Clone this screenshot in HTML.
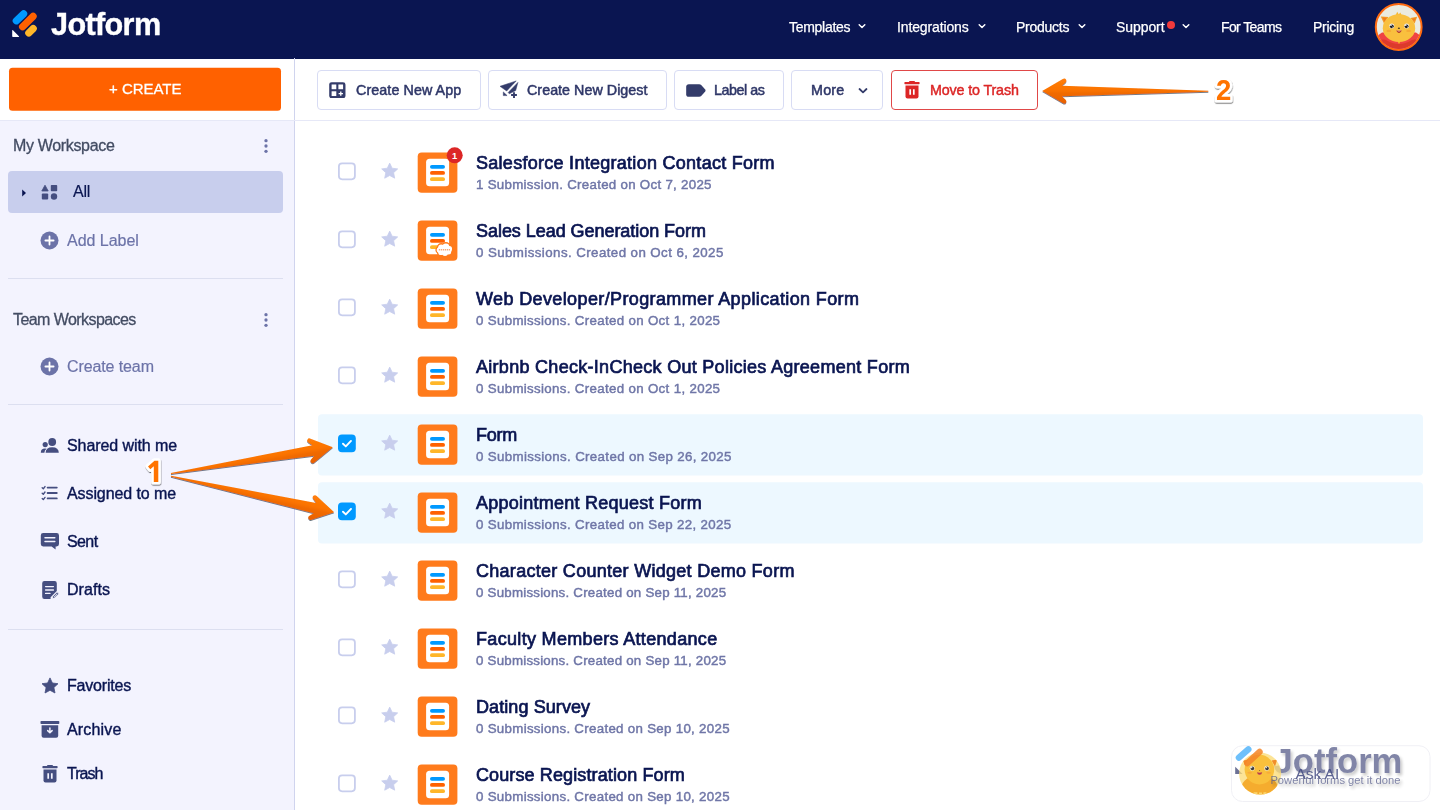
<!DOCTYPE html>
<html><head><meta charset="utf-8"><title>My Forms</title>
<style>
*{box-sizing:border-box;margin:0;padding:0}
html,body{width:1440px;height:810px;overflow:hidden;background:#fff;font-family:"Liberation Sans",sans-serif;color:#0a1551}
.x{will-change:transform;position:absolute;white-space:nowrap;display:block;font-family:"Liberation Sans",sans-serif}
.a{position:absolute;display:block}
#hdr{left:0;top:0;width:1440px;height:58.5px;background:#0a1551}
#side{left:0;top:120.5px;width:295px;height:689.5px;background:#f3f3fe}
#sideb{left:294px;top:58px;width:1px;height:752px;background:#d0d4ee}
#allrow{left:8px;top:171px;width:274.5px;height:41.5px;background:#c8ceed;border-radius:4px}
.hr{left:8px;width:274.5px;height:1px;background:#dcdff0}
#tbl{left:0;top:120.2px;width:1440px;height:1px;background:#e6e8f7}
.btn{top:70px;height:39.5px;border:1px solid #d8dcf4;border-radius:4px;background:#fff}
.row{left:318px;width:1105px;height:61.5px;border-radius:4px}
.sel{background:#edf8ff}
.cb{left:338px;width:17.7px;height:17.5px;border:1.8px solid #c8ceed;border-radius:4px;background:#fff}
.cb.on{background:#0099ff;border-color:#0099ff}
.fi{left:417.7px;width:39.7px;height:40.4px;background:#ff7b1c;border-radius:4px}
.fd{left:426.1px;width:23px;height:27.5px;background:#fff;border-radius:3.5px}
.fl{left:430px;width:15px;height:3.8px;border-radius:2px}

</style></head><body>
<div class="a" id="hdr"></div>
<svg class="a" style="left:10px;top:8px" width="30" height="32" viewBox="10 8 30 32">
<path d="M12.2 30.6 L12.2 36.2 Q12.2 36.9 12.9 36.9 L18.6 36.9 Q19.6 36.9 18.9 36.2 L13 30.3 Q12.2 29.6 12.2 30.6Z" fill="#fff"/>
<line x1="16.3" y1="20.8" x2="23.6" y2="13.8" stroke="#0099ff" stroke-width="7.2" stroke-linecap="round"/>
<line x1="22.6" y1="26.8" x2="33.1" y2="16.4" stroke="#ff6100" stroke-width="7.2" stroke-linecap="round"/>
<line x1="28.8" y1="33" x2="33.2" y2="28.6" stroke="#ffb629" stroke-width="7.2" stroke-linecap="round"/>
</svg>
<svg class="a" style="left:857.3px;top:21px" width="10" height="10" viewBox="0 0 10 10"><path d="M2.2 3.8 L5 6.5 L7.8 3.8" fill="none" stroke="#fff" stroke-width="1.5" stroke-linecap="round" stroke-linejoin="round"/></svg>
<svg class="a" style="left:977px;top:21px" width="10" height="10" viewBox="0 0 10 10"><path d="M2.2 3.8 L5 6.5 L7.8 3.8" fill="none" stroke="#fff" stroke-width="1.5" stroke-linecap="round" stroke-linejoin="round"/></svg>
<svg class="a" style="left:1077px;top:21px" width="10" height="10" viewBox="0 0 10 10"><path d="M2.2 3.8 L5 6.5 L7.8 3.8" fill="none" stroke="#fff" stroke-width="1.5" stroke-linecap="round" stroke-linejoin="round"/></svg>
<svg class="a" style="left:1181.3px;top:21px" width="10" height="10" viewBox="0 0 10 10"><path d="M2.2 3.8 L5 6.5 L7.8 3.8" fill="none" stroke="#fff" stroke-width="1.5" stroke-linecap="round" stroke-linejoin="round"/></svg>
<div class="a" style="left:1167px;top:20.8px;width:8px;height:8px;border-radius:50%;background:#f23a3c"></div>
<svg class="a" style="left:1374px;top:2px" width="50" height="50" viewBox="0 0 50 50">
<defs><clipPath id="avc"><circle cx="24.7" cy="25" r="22"/></clipPath></defs>
<circle cx="24.7" cy="25" r="22.9" fill="#ebebe0" stroke="#ff6a10" stroke-width="2"/>
<g clip-path="url(#avc)">
<path d="M0 36 L8 30.5 L42 30.5 L50 36 L50 50 L0 50Z" fill="#ef4343"/>
<path d="M0 40 Q8 36.5 12 38 Q25 46 38 38 Q42 36.5 50 40 L50 50 L0 50Z" fill="#dc3a2b"/>
<path d="M23.4 38.4 L26.6 38.4 L25.6 41.6 L24.4 41.6Z" fill="#f4b223"/>
<path d="M6.8 14.4 L14.4 15 L10 21.5Z" fill="#f59a23"/><path d="M43.2 14.8 L36.4 16 L40.6 21.5Z" fill="#f59a23"/>
<path d="M8.6 15.6 L12.6 16 L10.4 19.4Z" fill="#ee7d22"/><path d="M41.6 16 L38.2 16.8 L40.2 19.6Z" fill="#ee7d22"/>
<path d="M21.6 13.6 L23.2 9.8 L24.8 12.4 L26.2 10.4 L28 13.8Z" fill="#f8b62c"/>
<ellipse cx="25" cy="26.2" rx="16.2" ry="13.9" fill="#f9c03e"/>
<ellipse cx="14.8" cy="28.9" rx="2.4" ry="1.2" fill="#f6ab35"/><ellipse cx="34.6" cy="28.9" rx="2.4" ry="1.2" fill="#f6ab35"/>
<circle cx="17.8" cy="24.1" r="2.5" fill="#f4efe4"/><circle cx="32.6" cy="24.1" r="2.5" fill="#f4efe4"/>
<circle cx="17.8" cy="24.3" r="1.9" fill="#1d1d22"/><circle cx="32.6" cy="24.3" r="1.9" fill="#1d1d22"/>
<circle cx="17" cy="23.3" r=".8" fill="#fff"/><circle cx="31.8" cy="23.3" r=".8" fill="#fff"/>
<circle cx="18.7" cy="24.9" r=".5" fill="#fff"/><circle cx="33.5" cy="24.9" r=".5" fill="#fff"/>
<ellipse cx="24.9" cy="26.3" rx="1.1" ry=".7" fill="#4a3a20"/>
<path d="M22.3 28.3 Q25 29.2 27.7 28.3 Q27.2 31 25 31 Q22.8 31 22.3 28.3Z" fill="#a8231c"/>
<path d="M22.6 28.4 Q25 29.2 27.4 28.4 L27.2 29.1 Q25 29.8 22.8 29.1Z" fill="#fbe9d8"/>
</g></svg>
<div class="a" id="side"></div>
<div class="a" id="sideb"></div>
<svg class="a" style="left:0;top:60px" width="295" height="60" viewBox="0 60 295 60"><rect x="9" y="67.7" width="272" height="43" rx="3.5" fill="#ff6100"/></svg>
<div class="a" id="allrow"></div>
<div class="a hr" style="top:278px"></div>
<div class="a hr" style="top:404px"></div>
<div class="a hr" style="top:628.5px"></div>
<svg class="a" style="left:262px;top:136.5px" width="8" height="18" viewBox="0 0 8 18"><circle cx="4" cy="3.7" r="1.65" fill="#6c73a8"/><circle cx="4" cy="9" r="1.65" fill="#6c73a8"/><circle cx="4" cy="14.3" r="1.65" fill="#6c73a8"/></svg>
<svg class="a" style="left:262px;top:310.5px" width="8" height="18" viewBox="0 0 8 18"><circle cx="4" cy="3.7" r="1.65" fill="#6c73a8"/><circle cx="4" cy="9" r="1.65" fill="#6c73a8"/><circle cx="4" cy="14.3" r="1.65" fill="#6c73a8"/></svg>
<svg class="a" style="left:20px;top:187px" width="8" height="12" viewBox="0 0 8 12"><path d="M2.2 2.6 L6 6 L2.2 9.4Z" fill="#0a1551"/></svg>
<svg class="a" style="left:41px;top:184px" width="18" height="17" viewBox="0 0 18 17">
<path d="M4 1.2 L7.2 7 L.8 7Z" fill="#454e80" stroke="#454e80" stroke-width=".8" stroke-linejoin="round"/>
<rect x="9.8" y="1" width="6.4" height="6.2" rx=".8" fill="#454e80"/>
<rect x=".8" y="9.4" width="6.4" height="6.2" rx="1" fill="#454e80"/>
<circle cx="13" cy="12.5" r="3.2" fill="#454e80"/></svg>
<svg class="a" style="left:40px;top:230.5px" width="19" height="19" viewBox="0 0 19 19"><circle cx="9.5" cy="9.5" r="9" fill="#6c73a8"/><path d="M9.5 5.4 V13.6 M5.4 9.5 H13.6" stroke="#fff" stroke-width="1.8" stroke-linecap="round"/></svg>
<svg class="a" style="left:40px;top:356.7px" width="19" height="19" viewBox="0 0 19 19"><circle cx="9.5" cy="9.5" r="9" fill="#6c73a8"/><path d="M9.5 5.4 V13.6 M5.4 9.5 H13.6" stroke="#fff" stroke-width="1.8" stroke-linecap="round"/></svg>
<svg class="a" style="left:40px;top:437px" width="20" height="17" viewBox="0 0 20 17">
<circle cx="12.2" cy="5" r="3.9" fill="#454e80"/>
<path d="M5.6 15.8 Q5.6 10.2 12.2 10.2 Q18.8 10.2 18.8 15.8Z" fill="#454e80"/>
<circle cx="5.2" cy="7.6" r="2.6" fill="#454e80"/>
<path d="M.8 15.8 Q.8 11.6 5 11.6 Q6 11.6 6.6 11.8 Q4.4 13.2 4.4 15.8Z" fill="#454e80"/></svg>
<svg class="a" style="left:41px;top:485px" width="18" height="16" viewBox="0 0 18 16">
<g stroke="#454e80" stroke-width="1.8" stroke-linecap="round" fill="none">
<path d="M6.6 2.6 H15.8 M6.6 8 H15.8 M6.6 13.4 H15.8"/>
<path d="M1.2 2.8 L2.3 3.8 L4 1.6 M1.2 8.2 L2.3 9.2 L4 7 M1.2 13.6 L2.3 14.6 L4 12.4" stroke-width="1.4" stroke-linejoin="round"/></g></svg>
<svg class="a" style="left:40px;top:532px" width="20" height="19" viewBox="0 0 20 19">
<path d="M3.2 1 H16.6 Q19 1 19 3.4 V12 Q19 14.4 16.6 14.4 H15.6 V17.6 L11.6 14.4 H3.2 Q.8 14.4 .8 12 V3.4 Q.8 1 3.2 1Z" fill="#454e80"/>
<path d="M5 5.8 H14.8 M5 9.4 H14.8" stroke="#f3f3fe" stroke-width="1.5" stroke-linecap="round"/></svg>
<svg class="a" style="left:41px;top:579.5px" width="19" height="20" viewBox="0 0 19 20">
<path d="M3.4 1 H13.6 Q15.8 1 15.8 3.2 V11 L9.6 17.2 V19 H3.4 Q1.2 19 1.2 16.8 V3.2 Q1.2 1 3.4 1Z" fill="#454e80"/>
<path d="M4.6 6.6 H12.4 M4.6 10 H12.4 M4.6 13.4 H9" stroke="#f3f3fe" stroke-width="1.4" stroke-linecap="round"/>
<path d="M11.4 18.6 L11.8 16.4 L15.6 12.6 Q16.4 11.9 17.2 12.7 Q18 13.5 17.3 14.3 L13.5 18.1Z" fill="#454e80" stroke="#f3f3fe" stroke-width=".9"/>
<path d="M13 17 L16.3 13.7" stroke="#f3f3fe" stroke-width=".8"/></svg>
<svg class="a" style="left:41px;top:677px" width="18" height="17" viewBox="0 0 18 17"><path d="M9 .9 L11.4 6 L17 6.7 L12.9 10.5 L14 16 L9 13.3 L4 16 L5.1 10.5 L1 6.7 L6.6 6Z" fill="#454e80" stroke="#454e80" stroke-width=".8" stroke-linejoin="round"/></svg>
<svg class="a" style="left:40px;top:720px" width="20" height="19" viewBox="0 0 20 19">
<rect x=".5" y="1" width="18.8" height="3" rx=".8" fill="#454e80"/>
<path d="M1.6 5.2 H18.2 V15.8 Q18.2 17.8 16.2 17.8 H3.6 Q1.6 17.8 1.6 15.8Z" fill="#454e80"/>
<path d="M9.9 8 V12.6 M7.7 10.6 L9.9 12.8 L12.1 10.6" stroke="#f3f3fe" stroke-width="1.5" stroke-linecap="round" stroke-linejoin="round" fill="none"/></svg>
<svg class="a" style="left:41.5px;top:764px" width="16" height="19.5" viewBox="0 0 16 19.5"><path d="M5.6 .9 H10.4 L11.2 2 H15 Q15.6 2 15.6 2.7 V3.6 Q15.6 4.2 15 4.2 H1 Q.4 4.2 .4 3.6 V2.7 Q.4 2 1 2 H4.8Z" fill="#454e80"/>
<path d="M1.5 5.4 H14.5 V16.6 Q14.5 18.6 12.5 18.6 H3.5 Q1.5 18.6 1.5 16.6Z" fill="#454e80"/>
<path d="M6.2 9.2 V14.8 M9.8 9.2 V14.8" stroke="#f3f3fe" stroke-width="1.7"/></svg>
<div class="a" id="tbl"></div>
<div class="a btn" style="left:317px;width:163.5px;"></div>
<div class="a btn" style="left:488px;width:178.5px;"></div>
<div class="a btn" style="left:674px;width:109.79999999999995px;"></div>
<div class="a btn" style="left:791.4px;width:91.20000000000005px;"></div>
<div class="a btn" style="left:891px;width:146.79999999999995px;border-color:#e04848;"></div>
<svg class="a" style="left:329px;top:81.7px" width="16.7" height="16.5" viewBox="0 0 16 16" preserveAspectRatio="none">
<rect x=".2" y=".2" width="15.6" height="15.6" rx="2.4" fill="#343c6a"/>
<rect x="2.5" y="2.4" width="4.5" height="4.6" fill="#fff"/><rect x="9" y="2.4" width="4.5" height="4.6" fill="#fff"/>
<rect x="2.5" y="9" width="4.5" height="4.6" fill="#fff"/>
<path d="M11.3 9.2 V13.4 M9.2 11.3 H13.4" stroke="#fff" stroke-width="1.3"/></svg>
<svg class="a" style="left:494px;top:76px" width="32" height="28" viewBox="0 0 32 28">
<path d="M6 10.3 L22.2 4.9 L12.7 15Z" fill="#343c6a" stroke="#343c6a" stroke-width=".5" stroke-linejoin="round"/>
<path d="M23.9 6.4 L21.7 14.6 L15.3 17.8 L14.2 16.5Z" fill="#343c6a" stroke="#343c6a" stroke-width=".5" stroke-linejoin="round"/>
<path d="M9.3 15.9 L9.3 19.6 L13.1 19.6Z" fill="#343c6a" stroke="#343c6a" stroke-width=".5" stroke-linejoin="round"/>
<path d="M20 16.2 V21.9 M17.1 19 H22.9" stroke="#343c6a" stroke-width="1.9"/></svg>
<svg class="a" style="left:685.5px;top:83.5px" width="20" height="13" viewBox="0 0 20 13"><path d="M2.8 .2 H13.2 Q14.4 .2 15.2 1 L19.2 5.4 Q20 6.5 19.2 7.6 L15.2 12 Q14.4 12.8 13.2 12.8 H2.8 Q.2 12.8 .2 10.2 V2.8 Q.2 .2 2.8 .2Z" fill="#343c6a"/></svg>
<svg class="a" style="left:857px;top:86px" width="12" height="10" viewBox="0 0 12 10"><path d="M2.5 3 L6 6.3 L9.5 3" fill="none" stroke="#343c6a" stroke-width="1.8" stroke-linecap="round" stroke-linejoin="round"/></svg>
<svg class="a" style="left:903.8px;top:80.2px" width="16" height="19.5" viewBox="0 0 16 19.5"><path d="M5.6 .9 H10.4 L11.2 2 H15 Q15.6 2 15.6 2.7 V3.6 Q15.6 4.2 15 4.2 H1 Q.4 4.2 .4 3.6 V2.7 Q.4 2 1 2 H4.8Z" fill="#dc2626"/>
<path d="M1.5 5.4 H14.5 V16.6 Q14.5 18.6 12.5 18.6 H3.5 Q1.5 18.6 1.5 16.6Z" fill="#dc2626"/>
<path d="M6.2 9.2 V14.8 M9.8 9.2 V14.8" stroke="#fff" stroke-width="1.7"/></svg>
<svg class="a" style="left:0;top:0" width="1440" height="810" viewBox="0 0 1440 810">
<rect x="338.9" y="163.3" width="16" height="16" rx="3.2" fill="#fff" stroke="#c8ceed" stroke-width="1.8"/>
<path transform="translate(380.7 162.2)" d="M9 .9 L11.4 6 L17 6.7 L12.9 10.5 L14 16 L9 13.3 L4 16 L5.1 10.5 L1 6.7 L6.6 6Z" fill="#c8ceed" stroke="#c8ceed" stroke-width=".8" stroke-linejoin="round"/>
<rect x="417.7" y="152.4" width="39.7" height="40.4" rx="4" fill="#ff7b1c"/>
<rect x="426.1" y="158.8" width="23" height="27.5" rx="3.5" fill="#fff"/>
<rect x="430" y="164.9" width="15" height="3.8" rx="1.9" fill="#0099ff"/>
<rect x="430" y="171.0" width="15" height="3.8" rx="1.9" fill="#ff6100"/>
<rect x="430" y="177.3" width="15" height="3.8" rx="1.9" fill="#ffb629"/>
<rect x="338.9" y="231.3" width="16" height="16" rx="3.2" fill="#fff" stroke="#c8ceed" stroke-width="1.8"/>
<path transform="translate(380.7 230.2)" d="M9 .9 L11.4 6 L17 6.7 L12.9 10.5 L14 16 L9 13.3 L4 16 L5.1 10.5 L1 6.7 L6.6 6Z" fill="#c8ceed" stroke="#c8ceed" stroke-width=".8" stroke-linejoin="round"/>
<rect x="417.7" y="220.4" width="39.7" height="40.4" rx="4" fill="#ff7b1c"/>
<rect x="426.1" y="226.8" width="23" height="27.5" rx="3.5" fill="#fff"/>
<rect x="430" y="232.9" width="15" height="3.8" rx="1.9" fill="#0099ff"/>
<rect x="430" y="239.0" width="15" height="3.8" rx="1.9" fill="#ff6100"/>
<rect x="430" y="245.3" width="15" height="3.8" rx="1.9" fill="#ffb629"/>
<rect x="338.9" y="299.3" width="16" height="16" rx="3.2" fill="#fff" stroke="#c8ceed" stroke-width="1.8"/>
<path transform="translate(380.7 298.2)" d="M9 .9 L11.4 6 L17 6.7 L12.9 10.5 L14 16 L9 13.3 L4 16 L5.1 10.5 L1 6.7 L6.6 6Z" fill="#c8ceed" stroke="#c8ceed" stroke-width=".8" stroke-linejoin="round"/>
<rect x="417.7" y="288.4" width="39.7" height="40.4" rx="4" fill="#ff7b1c"/>
<rect x="426.1" y="294.8" width="23" height="27.5" rx="3.5" fill="#fff"/>
<rect x="430" y="300.9" width="15" height="3.8" rx="1.9" fill="#0099ff"/>
<rect x="430" y="307.0" width="15" height="3.8" rx="1.9" fill="#ff6100"/>
<rect x="430" y="313.3" width="15" height="3.8" rx="1.9" fill="#ffb629"/>
<rect x="338.9" y="367.3" width="16" height="16" rx="3.2" fill="#fff" stroke="#c8ceed" stroke-width="1.8"/>
<path transform="translate(380.7 366.2)" d="M9 .9 L11.4 6 L17 6.7 L12.9 10.5 L14 16 L9 13.3 L4 16 L5.1 10.5 L1 6.7 L6.6 6Z" fill="#c8ceed" stroke="#c8ceed" stroke-width=".8" stroke-linejoin="round"/>
<rect x="417.7" y="356.4" width="39.7" height="40.4" rx="4" fill="#ff7b1c"/>
<rect x="426.1" y="362.8" width="23" height="27.5" rx="3.5" fill="#fff"/>
<rect x="430" y="368.9" width="15" height="3.8" rx="1.9" fill="#0099ff"/>
<rect x="430" y="375.0" width="15" height="3.8" rx="1.9" fill="#ff6100"/>
<rect x="430" y="381.3" width="15" height="3.8" rx="1.9" fill="#ffb629"/>
<rect x="318" y="414.2" width="1105" height="61.3" rx="4" fill="#edf8ff"/>
<rect x="338" y="434.4" width="17.8" height="17.8" rx="4" fill="#0099ff"/>
<path d="M343 443.7 l2.8 2.7 l5.2 -5.5" fill="none" stroke="#fff" stroke-width="1.9" stroke-linecap="round" stroke-linejoin="round"/>
<path transform="translate(380.7 434.2)" d="M9 .9 L11.4 6 L17 6.7 L12.9 10.5 L14 16 L9 13.3 L4 16 L5.1 10.5 L1 6.7 L6.6 6Z" fill="#c8ceed" stroke="#c8ceed" stroke-width=".8" stroke-linejoin="round"/>
<rect x="417.7" y="424.4" width="39.7" height="40.4" rx="4" fill="#ff7b1c"/>
<rect x="426.1" y="430.8" width="23" height="27.5" rx="3.5" fill="#fff"/>
<rect x="430" y="436.9" width="15" height="3.8" rx="1.9" fill="#0099ff"/>
<rect x="430" y="443.0" width="15" height="3.8" rx="1.9" fill="#ff6100"/>
<rect x="430" y="449.3" width="15" height="3.8" rx="1.9" fill="#ffb629"/>
<rect x="318" y="482.2" width="1105" height="61.3" rx="4" fill="#edf8ff"/>
<rect x="338" y="502.4" width="17.8" height="17.8" rx="4" fill="#0099ff"/>
<path d="M343 511.7 l2.8 2.7 l5.2 -5.5" fill="none" stroke="#fff" stroke-width="1.9" stroke-linecap="round" stroke-linejoin="round"/>
<path transform="translate(380.7 502.2)" d="M9 .9 L11.4 6 L17 6.7 L12.9 10.5 L14 16 L9 13.3 L4 16 L5.1 10.5 L1 6.7 L6.6 6Z" fill="#c8ceed" stroke="#c8ceed" stroke-width=".8" stroke-linejoin="round"/>
<rect x="417.7" y="492.4" width="39.7" height="40.4" rx="4" fill="#ff7b1c"/>
<rect x="426.1" y="498.8" width="23" height="27.5" rx="3.5" fill="#fff"/>
<rect x="430" y="504.9" width="15" height="3.8" rx="1.9" fill="#0099ff"/>
<rect x="430" y="511.0" width="15" height="3.8" rx="1.9" fill="#ff6100"/>
<rect x="430" y="517.3" width="15" height="3.8" rx="1.9" fill="#ffb629"/>
<rect x="338.9" y="571.3" width="16" height="16" rx="3.2" fill="#fff" stroke="#c8ceed" stroke-width="1.8"/>
<path transform="translate(380.7 570.2)" d="M9 .9 L11.4 6 L17 6.7 L12.9 10.5 L14 16 L9 13.3 L4 16 L5.1 10.5 L1 6.7 L6.6 6Z" fill="#c8ceed" stroke="#c8ceed" stroke-width=".8" stroke-linejoin="round"/>
<rect x="417.7" y="560.4" width="39.7" height="40.4" rx="4" fill="#ff7b1c"/>
<rect x="426.1" y="566.8" width="23" height="27.5" rx="3.5" fill="#fff"/>
<rect x="430" y="572.9" width="15" height="3.8" rx="1.9" fill="#0099ff"/>
<rect x="430" y="579.0" width="15" height="3.8" rx="1.9" fill="#ff6100"/>
<rect x="430" y="585.3" width="15" height="3.8" rx="1.9" fill="#ffb629"/>
<rect x="338.9" y="639.3" width="16" height="16" rx="3.2" fill="#fff" stroke="#c8ceed" stroke-width="1.8"/>
<path transform="translate(380.7 638.2)" d="M9 .9 L11.4 6 L17 6.7 L12.9 10.5 L14 16 L9 13.3 L4 16 L5.1 10.5 L1 6.7 L6.6 6Z" fill="#c8ceed" stroke="#c8ceed" stroke-width=".8" stroke-linejoin="round"/>
<rect x="417.7" y="628.4" width="39.7" height="40.4" rx="4" fill="#ff7b1c"/>
<rect x="426.1" y="634.8" width="23" height="27.5" rx="3.5" fill="#fff"/>
<rect x="430" y="640.9" width="15" height="3.8" rx="1.9" fill="#0099ff"/>
<rect x="430" y="647.0" width="15" height="3.8" rx="1.9" fill="#ff6100"/>
<rect x="430" y="653.3" width="15" height="3.8" rx="1.9" fill="#ffb629"/>
<rect x="338.9" y="707.3" width="16" height="16" rx="3.2" fill="#fff" stroke="#c8ceed" stroke-width="1.8"/>
<path transform="translate(380.7 706.2)" d="M9 .9 L11.4 6 L17 6.7 L12.9 10.5 L14 16 L9 13.3 L4 16 L5.1 10.5 L1 6.7 L6.6 6Z" fill="#c8ceed" stroke="#c8ceed" stroke-width=".8" stroke-linejoin="round"/>
<rect x="417.7" y="696.4" width="39.7" height="40.4" rx="4" fill="#ff7b1c"/>
<rect x="426.1" y="702.8" width="23" height="27.5" rx="3.5" fill="#fff"/>
<rect x="430" y="708.9" width="15" height="3.8" rx="1.9" fill="#0099ff"/>
<rect x="430" y="715.0" width="15" height="3.8" rx="1.9" fill="#ff6100"/>
<rect x="430" y="721.3" width="15" height="3.8" rx="1.9" fill="#ffb629"/>
<rect x="338.9" y="775.3" width="16" height="16" rx="3.2" fill="#fff" stroke="#c8ceed" stroke-width="1.8"/>
<path transform="translate(380.7 774.2)" d="M9 .9 L11.4 6 L17 6.7 L12.9 10.5 L14 16 L9 13.3 L4 16 L5.1 10.5 L1 6.7 L6.6 6Z" fill="#c8ceed" stroke="#c8ceed" stroke-width=".8" stroke-linejoin="round"/>
<rect x="417.7" y="764.4" width="39.7" height="40.4" rx="4" fill="#ff7b1c"/>
<rect x="426.1" y="770.8" width="23" height="27.5" rx="3.5" fill="#fff"/>
<rect x="430" y="776.9" width="15" height="3.8" rx="1.9" fill="#0099ff"/>
<rect x="430" y="783.0" width="15" height="3.8" rx="1.9" fill="#ff6100"/>
<rect x="430" y="789.3" width="15" height="3.8" rx="1.9" fill="#ffb629"/>
<circle cx="454.7" cy="155.3" r="8" fill="#dc2626"/>
<g fill="#ff7b1c" stroke="#ff7b1c" stroke-width="2.6"><ellipse cx="444.2" cy="249.9" rx="7.6" ry="4.4"/><circle cx="441.2" cy="247.4" r="3"/><circle cx="445.9" cy="246.8" r="3.4"/><circle cx="449.4" cy="248.6" r="2.6"/><circle cx="441" cy="252.4" r="2.7"/><circle cx="445" cy="252.9" r="3"/><circle cx="448.6" cy="252" r="2.5"/></g><g fill="#fff"><ellipse cx="444.2" cy="249.9" rx="7.6" ry="4.4"/><circle cx="441.2" cy="247.4" r="3"/><circle cx="445.9" cy="246.8" r="3.4"/><circle cx="449.4" cy="248.6" r="2.6"/><circle cx="441" cy="252.4" r="2.7"/><circle cx="445" cy="252.9" r="3"/><circle cx="448.6" cy="252" r="2.5"/></g><path d="M438.8 249.8 H450" stroke="#f7a877" stroke-width="1.5" stroke-dasharray="1.3 .7"/>
<text x="454.7" y="158.9" text-anchor="middle" font-family="Liberation Sans, sans-serif" font-weight="bold" font-size="9.4" fill="#fff">1</text>
</svg>
<span class="x" id="logo" style="left:51.20px;top:8.70px;font-size:30.6px;line-height:30.6px;color:#fff;letter-spacing:-0.632px;font-weight:bold;-webkit-text-stroke:0.4px #fff;">Jotform</span>
<span class="x" id="n1" style="left:788.50px;top:20.34px;font-size:14px;line-height:14px;color:#fff;letter-spacing:-0.289px;-webkit-text-stroke:0.25px #fff;">Templates</span>
<span class="x" id="n2" style="left:897.00px;top:20.34px;font-size:14px;line-height:14px;color:#fff;letter-spacing:-0.134px;-webkit-text-stroke:0.25px #fff;">Integrations</span>
<span class="x" id="n3" style="left:1015.50px;top:20.34px;font-size:14px;line-height:14px;color:#fff;letter-spacing:-0.250px;-webkit-text-stroke:0.25px #fff;">Products</span>
<span class="x" id="n4" style="left:1115.60px;top:20.34px;font-size:14px;line-height:14px;color:#fff;letter-spacing:-0.074px;-webkit-text-stroke:0.25px #fff;">Support</span>
<span class="x" id="n5" style="left:1221.00px;top:20.34px;font-size:14px;line-height:14px;color:#fff;letter-spacing:-0.609px;-webkit-text-stroke:0.25px #fff;">For Teams</span>
<span class="x" id="n6" style="left:1313.00px;top:20.34px;font-size:14px;line-height:14px;color:#fff;letter-spacing:-0.249px;-webkit-text-stroke:0.25px #fff;">Pricing</span>
<span class="x" id="cr" style="left:109.00px;top:81.30px;font-size:15px;line-height:15px;color:#fff;letter-spacing:-0.022px;-webkit-text-stroke:0.3px #fff;">+ CREATE</span>
<span class="x" id="s1" style="left:13.00px;top:137.94px;font-size:16px;line-height:16px;color:#434c63;letter-spacing:-0.338px;-webkit-text-stroke:0.3px #434c63;">My Workspace</span>
<span class="x" id="s2" style="left:72.60px;top:183.97px;font-size:16px;line-height:16px;color:#0a1551;letter-spacing:-0.191px;-webkit-text-stroke:0.2px #0a1551;">All</span>
<span class="x" id="s3" style="left:66.70px;top:232.77px;font-size:16px;line-height:16px;color:#6c73a8;letter-spacing:-0.033px;-webkit-text-stroke:0.2px #6c73a8;">Add Label</span>
<span class="x" id="s4" style="left:13.00px;top:312.04px;font-size:16px;line-height:16px;color:#434c63;letter-spacing:-0.572px;-webkit-text-stroke:0.3px #434c63;">Team Workspaces</span>
<span class="x" id="s5" style="left:66.70px;top:359.04px;font-size:16px;line-height:16px;color:#6c73a8;letter-spacing:-0.105px;-webkit-text-stroke:0.2px #6c73a8;">Create team</span>
<span class="x" id="s6" style="left:66.70px;top:438.26px;font-size:16px;line-height:16px;color:#0a1551;letter-spacing:-0.082px;-webkit-text-stroke:0.4px #0a1551;">Shared with me</span>
<span class="x" id="s7" style="left:66.70px;top:486.26px;font-size:16px;line-height:16px;color:#0a1551;letter-spacing:-0.091px;-webkit-text-stroke:0.4px #0a1551;">Assigned to me</span>
<span class="x" id="s8" style="left:66.70px;top:534.26px;font-size:16px;line-height:16px;color:#0a1551;letter-spacing:-0.607px;-webkit-text-stroke:0.4px #0a1551;">Sent</span>
<span class="x" id="s9" style="left:66.70px;top:582.26px;font-size:16px;line-height:16px;color:#0a1551;letter-spacing:0.046px;-webkit-text-stroke:0.4px #0a1551;">Drafts</span>
<span class="x" id="s10" style="left:66.70px;top:677.86px;font-size:16px;line-height:16px;color:#0a1551;letter-spacing:-0.187px;-webkit-text-stroke:0.4px #0a1551;">Favorites</span>
<span class="x" id="s11" style="left:66.70px;top:722.26px;font-size:16px;line-height:16px;color:#0a1551;letter-spacing:0.157px;-webkit-text-stroke:0.4px #0a1551;">Archive</span>
<span class="x" id="s12" style="left:66.70px;top:766.26px;font-size:16px;line-height:16px;color:#0a1551;letter-spacing:-0.953px;-webkit-text-stroke:0.4px #0a1551;">Trash</span>
<span class="x" id="b1" style="left:355.80px;top:83.16px;font-size:14.3px;line-height:14.3px;color:#2f3768;letter-spacing:0.084px;-webkit-text-stroke:0.5px #2f3768;">Create New App</span>
<span class="x" id="b2" style="left:527.00px;top:83.16px;font-size:14.3px;line-height:14.3px;color:#2f3768;letter-spacing:0.032px;-webkit-text-stroke:0.5px #2f3768;">Create New Digest</span>
<span class="x" id="b3" style="left:713.60px;top:83.16px;font-size:14.3px;line-height:14.3px;color:#2f3768;letter-spacing:-0.452px;-webkit-text-stroke:0.5px #2f3768;">Label as</span>
<span class="x" id="b4" style="left:810.90px;top:83.16px;font-size:14.3px;line-height:14.3px;color:#2f3768;letter-spacing:0.241px;-webkit-text-stroke:0.5px #2f3768;">More</span>
<span class="x" id="b5" style="left:930.00px;top:83.16px;font-size:14.3px;line-height:14.3px;color:#dc2626;letter-spacing:-0.141px;-webkit-text-stroke:0.45px #dc2626;">Move to Trash</span>
<span class="x" id="t0" style="left:475.80px;top:154.25px;font-size:18px;line-height:18px;color:#0a1551;letter-spacing:0.278px;-webkit-text-stroke:0.7px #0a1551;">Salesforce Integration Contact Form</span>
<span class="x" id="u0" style="left:475.80px;top:178.27px;font-size:13.3px;line-height:13.3px;color:#6f76a7;letter-spacing:0.287px;-webkit-text-stroke:0.45px #6f76a7;">1 Submission. Created on Oct 7, 2025</span>
<span class="x" id="t1" style="left:475.80px;top:222.25px;font-size:18px;line-height:18px;color:#0a1551;letter-spacing:-0.046px;-webkit-text-stroke:0.7px #0a1551;">Sales Lead Generation Form</span>
<span class="x" id="u1" style="left:475.80px;top:246.27px;font-size:13.3px;line-height:13.3px;color:#6f76a7;letter-spacing:0.422px;-webkit-text-stroke:0.45px #6f76a7;">0 Submissions. Created on Oct 6, 2025</span>
<span class="x" id="t2" style="left:475.80px;top:290.25px;font-size:18px;line-height:18px;color:#0a1551;letter-spacing:0.379px;-webkit-text-stroke:0.7px #0a1551;">Web Developer/Programmer Application Form</span>
<span class="x" id="u2" style="left:475.80px;top:314.27px;font-size:13.3px;line-height:13.3px;color:#6f76a7;letter-spacing:0.331px;-webkit-text-stroke:0.45px #6f76a7;">0 Submissions. Created on Oct 1, 2025</span>
<span class="x" id="t3" style="left:475.80px;top:358.25px;font-size:18px;line-height:18px;color:#0a1551;letter-spacing:0.288px;-webkit-text-stroke:0.7px #0a1551;">Airbnb Check-InCheck Out Policies Agreement Form</span>
<span class="x" id="u3" style="left:475.80px;top:382.27px;font-size:13.3px;line-height:13.3px;color:#6f76a7;letter-spacing:0.331px;-webkit-text-stroke:0.45px #6f76a7;">0 Submissions. Created on Oct 1, 2025</span>
<span class="x" id="t4" style="left:475.80px;top:426.25px;font-size:18px;line-height:18px;color:#0a1551;letter-spacing:-0.267px;-webkit-text-stroke:0.7px #0a1551;">Form</span>
<span class="x" id="u4" style="left:475.80px;top:450.27px;font-size:13.3px;line-height:13.3px;color:#6f76a7;letter-spacing:0.352px;-webkit-text-stroke:0.45px #6f76a7;">0 Submissions. Created on Sep 26, 2025</span>
<span class="x" id="t5" style="left:475.80px;top:494.25px;font-size:18px;line-height:18px;color:#0a1551;letter-spacing:0.243px;-webkit-text-stroke:0.7px #0a1551;">Appointment Request Form</span>
<span class="x" id="u5" style="left:475.80px;top:518.27px;font-size:13.3px;line-height:13.3px;color:#6f76a7;letter-spacing:0.341px;-webkit-text-stroke:0.45px #6f76a7;">0 Submissions. Created on Sep 22, 2025</span>
<span class="x" id="t6" style="left:475.80px;top:562.25px;font-size:18px;line-height:18px;color:#0a1551;letter-spacing:0.282px;-webkit-text-stroke:0.7px #0a1551;">Character Counter Widget Demo Form</span>
<span class="x" id="u6" style="left:475.80px;top:586.27px;font-size:13.3px;line-height:13.3px;color:#6f76a7;letter-spacing:0.233px;-webkit-text-stroke:0.45px #6f76a7;">0 Submissions. Created on Sep 11, 2025</span>
<span class="x" id="t7" style="left:475.80px;top:630.25px;font-size:18px;line-height:18px;color:#0a1551;letter-spacing:0.323px;-webkit-text-stroke:0.7px #0a1551;">Faculty Members Attendance</span>
<span class="x" id="u7" style="left:475.80px;top:654.27px;font-size:13.3px;line-height:13.3px;color:#6f76a7;letter-spacing:0.233px;-webkit-text-stroke:0.45px #6f76a7;">0 Submissions. Created on Sep 11, 2025</span>
<span class="x" id="t8" style="left:475.80px;top:698.25px;font-size:18px;line-height:18px;color:#0a1551;letter-spacing:0.086px;-webkit-text-stroke:0.7px #0a1551;">Dating Survey</span>
<span class="x" id="u8" style="left:475.80px;top:722.27px;font-size:13.3px;line-height:13.3px;color:#6f76a7;letter-spacing:0.301px;-webkit-text-stroke:0.45px #6f76a7;">0 Submissions. Created on Sep 10, 2025</span>
<span class="x" id="t9" style="left:475.80px;top:766.25px;font-size:18px;line-height:18px;color:#0a1551;letter-spacing:0.118px;-webkit-text-stroke:0.7px #0a1551;">Course Registration Form</span>
<span class="x" id="u9" style="left:475.80px;top:790.27px;font-size:13.3px;line-height:13.3px;color:#6f76a7;letter-spacing:0.301px;-webkit-text-stroke:0.45px #6f76a7;">0 Submissions. Created on Sep 10, 2025</span>
<svg class="a" style="left:0;top:0" width="1440" height="810" viewBox="0 0 1440 810">
<defs><linearGradient id="g1" gradientUnits="userSpaceOnUse" x1="311.1" y1="438.6" x2="315.0" y2="462.3"><stop offset="0" stop-color="#ff7e08"/><stop offset=".45" stop-color="#fb7303"/><stop offset=".6" stop-color="#f06a02"/><stop offset="1" stop-color="#e96202"/></linearGradient><linearGradient id="g2" gradientUnits="userSpaceOnUse" x1="317.3" y1="496.3" x2="312.1" y2="519.7"><stop offset="0" stop-color="#ff7e08"/><stop offset=".45" stop-color="#fb7303"/><stop offset=".6" stop-color="#f06a02"/><stop offset="1" stop-color="#e96202"/></linearGradient><linearGradient id="g3" gradientUnits="userSpaceOnUse" x1="1062.2" y1="79.0" x2="1062.2" y2="103.0"><stop offset="0" stop-color="#ff7e08"/><stop offset=".45" stop-color="#fb7303"/><stop offset=".6" stop-color="#f06a02"/><stop offset="1" stop-color="#e96202"/></linearGradient>
<filter id="ash" x="-5%" y="-20%" width="110%" height="150%"><feDropShadow dx="0" dy=".9" stdDeviation=".55" flood-color="#1b2a3a" flood-opacity=".7"/></filter>
<filter id="nsh" x="-30%" y="-30%" width="160%" height="170%"><feDropShadow dx=".3" dy="1.1" stdDeviation=".5" flood-color="#000" flood-opacity=".6"/></filter>
<filter id="wsh" x="-10%" y="-20%" width="120%" height="160%"><feDropShadow dx="2" dy="2.5" stdDeviation="1.8" flood-color="#000" flood-opacity=".35"/></filter>
</defs>
<g filter="url(#ash)"><path d="M332.80 447.30 L314.39 462.53 Q312.61 464.03 311.15 462.54 Q309.81 461.14 311.07 459.52 L314.20 455.67 L171.08 473.89 L170.92 472.91 L312.51 445.20 L308.33 442.54 Q306.63 441.39 307.46 439.64 Q308.37 437.77 310.54 438.64 Z" fill="url(#g1)"/><path d="M334.20 512.30 L311.48 519.68 Q309.27 520.42 308.46 518.50 Q307.73 516.70 309.50 515.66 L313.82 513.23 L170.89 476.79 L171.11 475.81 L316.10 502.88 L313.20 498.86 Q312.04 497.17 313.46 495.85 Q315.00 494.44 316.69 496.05 Z" fill="url(#g2)"/><path d="M1042.20 91.00 L1062.81 78.92 Q1064.82 77.73 1066.01 79.43 Q1067.11 81.03 1065.61 82.43 L1061.91 85.72 L1208.30 90.70 L1208.30 91.70 L1061.89 96.32 L1065.59 99.63 Q1067.09 101.03 1065.99 102.63 Q1064.78 104.33 1062.79 103.12 Z" fill="url(#g3)"/></g>
<g filter="url(#nsh)"><path d="M158.3 460.8 L154.5 460.8 L148 466.5 L150.3 469.2 L153.8 466.2 L153.8 482 L158.3 482 Z" fill="#fff" stroke="#fff" stroke-width="5.2" stroke-linejoin="round"/></g><path d="M158.3 460.8 L154.5 460.8 L148 466.5 L150.3 469.2 L153.8 466.2 L153.8 482 L158.3 482 Z" fill="#ff7300"/>
<g filter="url(#nsh)"><text x="1216" y="99.9" font-family="Liberation Sans, sans-serif" font-weight="bold" font-size="29.4" textLength="15.3" lengthAdjust="spacingAndGlyphs" fill="#fff" stroke="#fff" stroke-width="5.2" stroke-linejoin="round">2</text></g><text x="1216" y="99.9" font-family="Liberation Sans, sans-serif" font-weight="bold" font-size="29.4" textLength="15.3" lengthAdjust="spacingAndGlyphs" fill="#ff7300">2</text>
<rect x="1231.5" y="745.7" width="198.5" height="55.8" rx="11" fill="#fff" stroke="#f0f0f5" stroke-width="1"/>
<path d="M1235.2 766.8 L1235.2 774 L1242.6 774Z" fill="#3b4271" opacity=".75"/>
<g opacity=".6" filter="url(#wsh)"><text x="1273.6" y="773.3" font-family="Liberation Sans, sans-serif" font-weight="bold" font-size="34.2" textLength="128.8" lengthAdjust="spacingAndGlyphs" fill="#2d356d">Jotform</text></g>
<text x="1295.4" y="778.5" font-family="Liberation Sans, sans-serif" font-size="15" textLength="43.8" lengthAdjust="spacingAndGlyphs" fill="#434b82" opacity=".85">Ask AI</text>
<defs><clipPath id="wcc"><circle cx="1260.1" cy="773.6" r="21"/></clipPath></defs>
<circle cx="1260.1" cy="773.6" r="21" fill="#fbdc78" opacity=".78"/><g opacity=".9">
<g clip-path="url(#wcc)">
<ellipse cx="1259.6" cy="787.5" rx="18" ry="12.5" fill="#f5a623"/>
<path d="M1243 760.4 L1249 759.4 L1245.4 766.6Z M1277.2 759.4 L1271.6 760.6 L1275 766.4Z" fill="#f0851f"/>
<circle cx="1259.4" cy="769.6" r="14.8" fill="#f9bd33"/>
<path d="M1253.6 792.2 H1257.4 V795 H1253.6Z M1259 792.6 H1262 V795 H1259Z M1263.4 792.2 H1266.4 V795 H1263.4Z" fill="#fbd568"/>
<ellipse cx="1249.6" cy="772.7" rx="2.3" ry="1" fill="#f8a531"/><ellipse cx="1268.6" cy="772.7" rx="2.3" ry="1" fill="#f8a531"/>
<circle cx="1252.2" cy="768.2" r="2.5" fill="#f4ecd2"/><circle cx="1266.8" cy="768.2" r="2.5" fill="#f4ecd2"/>
<circle cx="1252.4" cy="768.4" r="1.8" fill="#2a2a35"/><circle cx="1267" cy="768.4" r="1.8" fill="#2a2a35"/>
<circle cx="1251.7" cy="767.6" r=".7" fill="#fff"/><circle cx="1266.3" cy="767.6" r=".7" fill="#fff"/>
<path d="M1257 772.3 Q1259.6 773 1262.2 772.3 Q1261.8 774.8 1259.6 774.8 Q1257.4 774.8 1257 772.3Z" fill="#b02a4a"/>
<circle cx="1259.6" cy="770.6" r=".5" fill="#6b4a1a"/>
</g></g>
<g filter="url(#wsh)" opacity=".75"><text x="1270.4" y="783.6" font-family="Liberation Sans, sans-serif" font-size="11.3" textLength="130" lengthAdjust="spacingAndGlyphs" fill="#555b88">Powerful forms get it done</text></g>
<line x1="1238.9" y1="757.6" x2="1248.3" y2="749.4" stroke="#62bbfb" stroke-width="6.4" stroke-linecap="round" opacity=".92"/>
<line x1="1247.2" y1="763.2" x2="1259.6" y2="751.9" stroke="#f58527" stroke-width="6.2" stroke-linecap="round" opacity=".85"/>
</svg>
</body></html>
